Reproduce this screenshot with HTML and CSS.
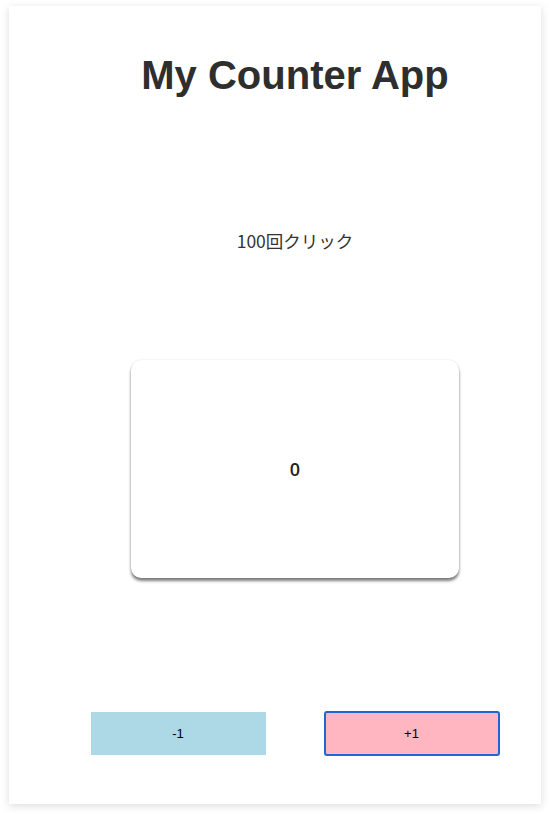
FILE: index.html
```html
<!DOCTYPE html>
<html lang="ja">
<head>
<meta charset="utf-8">
<title>My Counter App</title>
<link rel="stylesheet" href="styles.css">
</head>
<body>
<main class="app">
  <h1 class="title">My Counter App</h1>
  <p class="goal">100回クリック</p>
  <div class="card"><span class="count">0</span></div>
  <div class="actions">
    <button class="btn btn-minus">-1</button>
    <button class="btn btn-plus">+1</button>
  </div>
</main>
</body>
</html>
```

FILE: styles.css
```css
html, body {
  margin: 0;
  padding: 0;
  background: #ffffff;
}
body {
  font-family: "Liberation Sans", "Noto Sans CJK JP", Arial, sans-serif;
  color: #333333;
}
.app {
  box-sizing: border-box;
  margin: 6px 9px 12px 9px;
  height: 798px;
  padding-left: 40px;
  background: #ffffff;
  box-shadow: 0 2px 8px rgba(0, 0, 0, 0.14);
  display: flex;
  flex-direction: column;
  align-items: center;
}
.title {
  margin: 45px 0 0 0;
  font-size: 40px;
  line-height: 48px;
  font-weight: 700;
  color: #2e2e2e;
}
.goal {
  margin: 130px 0 0 0;
  font-family: "Noto Sans CJK JP", sans-serif;
  font-size: 17.5px;
  line-height: 24px;
  color: #333333;
}
.card {
  margin-top: 107px;
  width: 328px;
  height: 218px;
  border-radius: 10px;
  background: #ffffff;
  box-shadow: 0 3px 3px rgba(0, 0, 0, 0.5), 0 0 2px rgba(0, 0, 0, 0.12);
  display: flex;
  align-items: center;
  justify-content: center;
}
.count {
  font-family: "Open Sans", "Noto Sans", sans-serif;
  font-size: 18px;
  font-weight: 600;
  color: #222222;
}
.actions {
  margin-top: 133px;
  display: flex;
  align-items: center;
  gap: 58px;
}
.btn {
  font-family: "Liberation Sans", Arial, sans-serif;
  font-size: 13px;
  color: #000000;
  cursor: pointer;
  padding: 0;
  box-sizing: border-box;
}
.btn-minus {
  width: 175px;
  height: 43px;
  border: none;
  background: #add8e6;
}
.btn-plus {
  width: 176px;
  height: 45px;
  border: 2px solid #1f66d1;
  border-radius: 3px;
  background: #ffb6c1;
}
```
